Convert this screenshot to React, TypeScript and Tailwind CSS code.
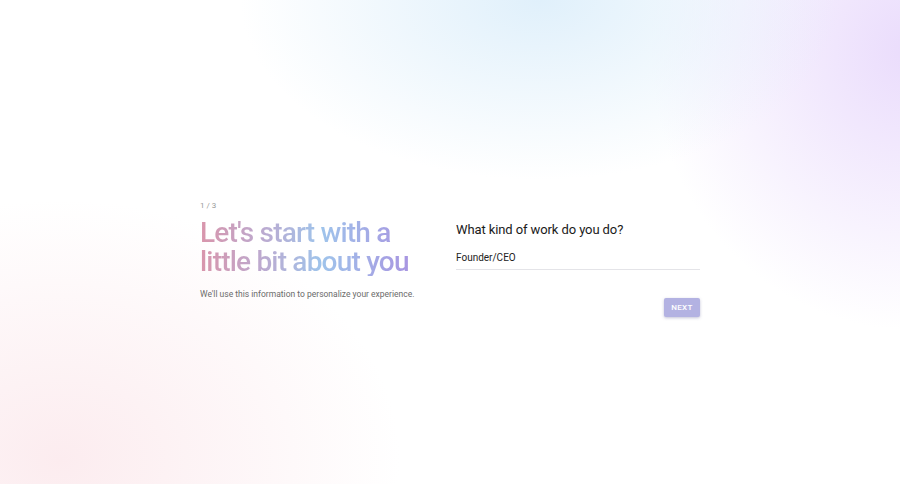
import React from 'react';

const App: React.FC = () => {
    return (
        <div className="min-h-screen w-full bg-white bg-[radial-gradient(ellipse_300px_180px_at_540px_0px,#e0f0fb,transparent),radial-gradient(ellipse_260px_280px_at_910px_50px,#eadcfc,transparent),radial-gradient(ellipse_340px_260px_at_60px_460px,#fcecef,transparent)] font-['Roboto',sans-serif]">
            <div className="mx-auto flex w-[500px] pt-[201px]">
                <div className="w-[256px]">
                    <div className="text-[8px] leading-[10px] text-[#9a9a9a]">1 / 3</div>
                    <h1 className="mt-[7px] w-fit bg-[linear-gradient(90deg,#d995ab_0%,#bcaad0_30%,#9fc4eb_58%,#a896e1_100%)] bg-clip-text text-[28px] leading-[29px] font-medium tracking-[-0.8px] text-transparent">
                        Let's start with a<br />little bit about you
                    </h1>
                    <p className="mt-[12px] text-[8.5px] leading-[12px] text-[#6b6b6b]">
                        We'll use this information to personalize your experience.
                    </p>
                </div>
                <div className="flex-1 pt-[20px]">
                    <h2 className="text-[13px] leading-[18px] tracking-[-0.1px] text-[#1a1a1a]">What kind of work do you do?</h2>
                    <div className="mt-[12px] border-b border-[#e4e4e8] pb-[5px] text-[10px] leading-[13px] text-[#222]">
                        Founder/CEO
                    </div>
                    <div className="mt-[28px] flex justify-end">
                        <button className="h-[19px] w-[36px] rounded-[2px] bg-[#b3b2e2] text-[8px] font-medium tracking-[0.3px] text-white shadow-[0_1px_3px_rgba(80,80,140,0.35)]">
                            NEXT
                        </button>
                    </div>
                </div>
            </div>
        </div>
    );
};

export default App;
